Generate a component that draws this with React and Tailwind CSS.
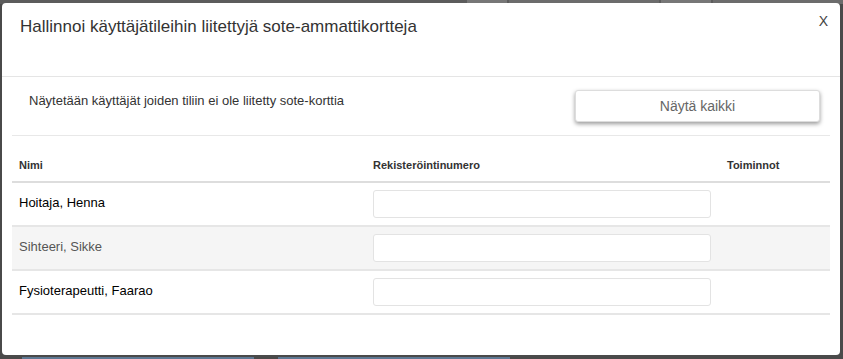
export default function App() {
  const rows = [
    { name: 'Hoitaja, Henna', muted: false, striped: false },
    { name: 'Sihteeri, Sikke', muted: true, striped: true },
    { name: 'Fysioterapeutti, Faarao', muted: false, striped: false },
  ];

  return (
    <div className="relative h-[359px] w-[843px] overflow-hidden bg-[#4a4a4a] font-['Liberation_Sans',Arial,sans-serif]">
      {/* page peeking out behind the backdrop */}
      <div className="absolute left-0 right-0 top-0 flex h-[4px] justify-end gap-[2px] bg-[#5c5c5c]">
        <div className="w-[40px] bg-[#777]" />
        <div className="w-[150px] bg-[#6c6c6c]" />
        <div className="w-[50px] bg-[#777]" />
        <div className="w-[130px] bg-[#6c6c6c]" />
      </div>
      <div className="absolute bottom-0 left-0 right-0 flex h-[2px] gap-[24px] pl-[22px]">
        <div className="w-[232px] bg-[#5e7893]" />
        <div className="w-[232px] bg-[#5e7893]" />
      </div>

      <div className="relative ml-[2px] mr-[3px] mt-[3px] flex h-[352px] flex-col rounded-[4px] bg-white text-[#333]">
        {/* header */}
        <div className="flex h-[74px] items-start justify-between border-b border-[#e5e5e5] pl-[18px] pr-[12px] pt-[12px]">
          <h4 className="text-[17px] leading-[24px] text-[#333]">
            Hallinnoi käyttäjätileihin liitettyjä sote-ammattikortteja
          </h4>
          <button className="mt-[-4px] text-[14px] text-[#444]">X</button>
        </div>

        {/* filter row */}
        <div className="mx-[10px] flex h-[59px] items-start justify-between border-b border-[#e8e8e8] pl-[17px] pr-[10px]">
          <p className="pt-[14px] text-[13px] text-[#333]">
            Näytetään käyttäjät joiden tiliin ei ole liitetty sote-korttia
          </p>
          <button className="mt-[13px] h-[32px] w-[245px] rounded-[3px] border border-[#ddd] bg-white text-[14px] text-[#666] shadow-[0_2px_4px_rgba(0,0,0,0.4)]">
            Näytä kaikki
          </button>
        </div>

        {/* table */}
        <div className="mx-[10px] mt-[21px]">
          <div className="grid h-[26px] grid-cols-[354px_354px_1fr] items-start border-b-2 border-[#ddd] pl-[7px] text-[11px] font-bold text-[#333]">
            <div>Nimi</div>
            <div>Rekisteröintinumero</div>
            <div>Toiminnot</div>
          </div>
          {rows.map((row) => (
            <div
              key={row.name}
              className={`grid h-[44px] grid-cols-[354px_354px_1fr] items-center border-b-2 border-[#e6e6e6] pl-[7px] text-[13px] ${
                row.striped ? 'bg-[#f5f5f5]' : 'bg-white'
              }`}
            >
              <div className={`-mt-[2px] ${row.muted ? 'text-[#555]' : 'text-black'}`}>{row.name}</div>
              <div>
                <input
                  type="text"
                  className="block h-[28px] w-[338px] rounded-[3px] border border-[#e3e3e3] bg-white outline-none"
                />
              </div>
              <div />
            </div>
          ))}
        </div>
      </div>
    </div>
  );
}
